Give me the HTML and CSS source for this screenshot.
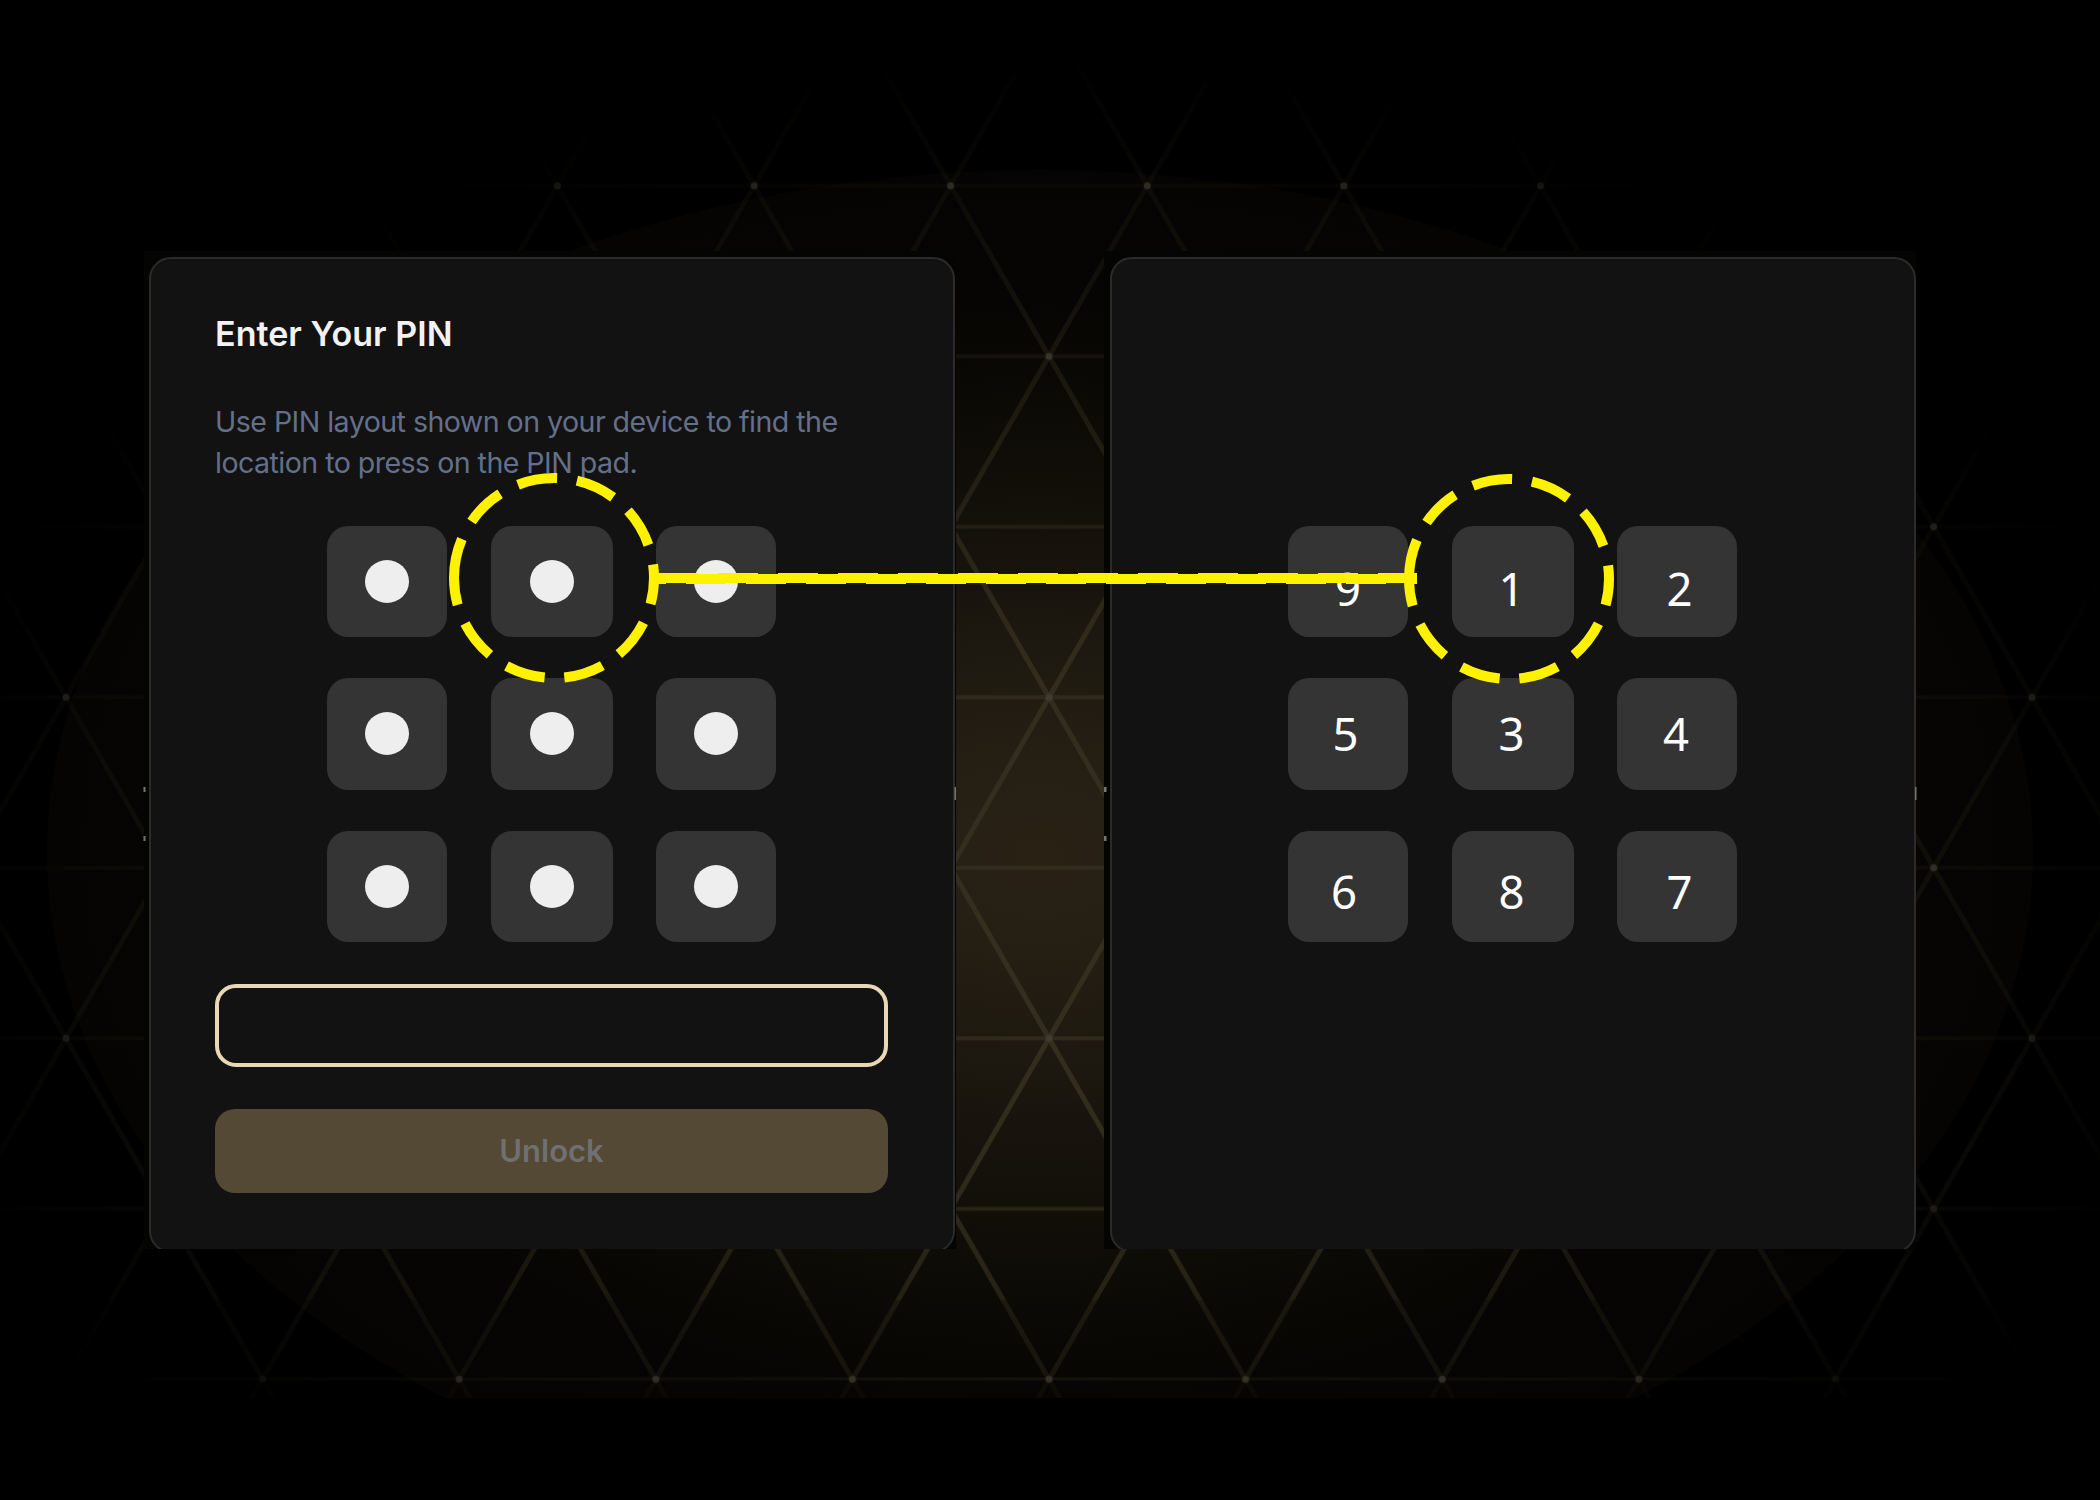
FILE: index.html
```html
<!DOCTYPE html>
<html lang="en">
<head>
<meta charset="utf-8">
<title>Enter Your PIN</title>
<link rel="stylesheet" href="styles.css">
</head>
<body>
<main class="stage">
  <svg class="backdrop" width="2100" height="1500" viewBox="0 0 2100 1500" aria-hidden="true">
    <defs>
      <radialGradient id="glow" gradientUnits="userSpaceOnUse" cx="0" cy="0" r="1" gradientTransform="translate(1040 852) scale(993 682)">
        <stop offset="0" stop-color="#2a2014"/>
        <stop offset=".1" stop-color="#262014"/>
        <stop offset=".25" stop-color="#201b11"/>
        <stop offset=".4" stop-color="#18140d"/>
        <stop offset=".55" stop-color="#110e08"/>
        <stop offset=".68" stop-color="#0a0905"/>
        <stop offset=".8" stop-color="#060503"/>
        <stop offset="1" stop-color="#050402"/>
      </radialGradient>
      <radialGradient id="fade" gradientUnits="userSpaceOnUse" cx="0" cy="0" r="1" gradientTransform="translate(1049 920) scale(1150 870)">
        <stop offset="0" stop-color="#fff"/>
        <stop offset=".3" stop-color="#ddd"/>
        <stop offset=".5" stop-color="#888"/>
        <stop offset=".65" stop-color="#5c5c5c"/>
        <stop offset=".8" stop-color="#333"/>
        <stop offset="1" stop-color="#000"/>
      </radialGradient>
      <radialGradient id="nodeFade" gradientUnits="userSpaceOnUse" cx="0" cy="0" r="1" gradientTransform="translate(1049 840) scale(1150 820)">
        <stop offset="0" stop-color="#fff"/>
        <stop offset=".8" stop-color="#aaa"/>
        <stop offset="1" stop-color="#000"/>
      </radialGradient>
      <mask id="meshMask" maskUnits="userSpaceOnUse" x="0" y="0" width="2100" height="1500"><rect width="2100" height="1398" fill="url(#fade)"/></mask>
      <mask id="nodeMask" maskUnits="userSpaceOnUse" x="0" y="0" width="2100" height="1500"><rect width="2100" height="1398" fill="url(#nodeFade)"/></mask>
      <pattern id="mesh" patternUnits="userSpaceOnUse" x="1049" y="356.3" width="196.6" height="341">
        <path d="M0 0L196.6 341M196.6 0L0 341" fill="none" stroke="#34301f" stroke-width="5"/>
        <path d="M0 0H196.6M0 170.5H196.6M0 341H196.6" fill="none" stroke="#34301f" stroke-width="4" opacity=".8"/>
      </pattern>
      <pattern id="nodes" patternUnits="userSpaceOnUse" x="1049" y="356.3" width="196.6" height="341">
        <g fill="#403d33"><circle r="3.500"/><circle cx="196.6" r="3.500"/><circle cy="341" r="3.500"/><circle cx="196.6" cy="341" r="3.500"/><circle cx="98.3" cy="170.5" r="3.500"/></g>
      </pattern>
      <clipPath id="lit"><rect width="2100" height="1398"/></clipPath>
    </defs>
    <ellipse cx="1040" cy="852" rx="993" ry="682" fill="url(#glow)" clip-path="url(#lit)"/>
    <g mask="url(#meshMask)">
      <rect width="2100" height="1300" fill="url(#mesh)"/>
      <rect y="1300" width="2100" height="80" fill="url(#mesh)" opacity=".7"/>
      <rect y="1380" width="2100" height="18" fill="url(#mesh)" opacity=".3"/>
    </g>
    <rect width="2100" height="1398" fill="url(#nodes)" mask="url(#nodeMask)"/>
  </svg>

  <section class="panel">
    <div class="card">
      <h1 class="title">Enter Your PIN</h1>
      <p class="hint">Use PIN layout shown on your device to find the<br>location to press on the PIN pad.</p>
      <div class="pad">
        <div class="key"><i class="dot"></i></div><div class="key"><i class="dot"></i></div><div class="key"><i class="dot"></i></div>
        <div class="key"><i class="dot"></i></div><div class="key"><i class="dot"></i></div><div class="key"><i class="dot"></i></div>
        <div class="key"><i class="dot"></i></div><div class="key"><i class="dot"></i></div><div class="key"><i class="dot"></i></div>
      </div>
      <div class="field"></div>
      <div class="unlock"><span>Unlock</span></div>
    </div>
  </section>

  <section class="panel">
    <div class="card device">
      <div class="pad digits">
        <div class="key r1">9</div><div class="key r1 left1">1</div><div class="key r1 right2">2</div>
        <div class="key r2 left3">5</div><div class="key r2 left1">3</div><div class="key r2 left1">4</div>
        <div class="key r3 left4">6</div><div class="key r3 left1">8</div><div class="key r3 right2">7</div>
      </div>
    </div>
  </section>

  <svg class="callout" width="2100" height="1500" viewBox="0 0 2100 1500" aria-hidden="true">
    <g fill="#77756f">
      <path d="M143.5 787h2v5h-2zM143.5 836h2v5h-2zM1104 787h2.500v5h-2.500zM1104 836h2.500v5h-2.500z"/>
      <path d="M954.500 787h1.500v13h-1.500zM1915 787h1.500v13h-1.500z"/>
    </g>
    <g fill="none" stroke="#fff200" stroke-width="10" stroke-dasharray="40 20">
      <path d="M454 578A100 100 0 0 1 654 578A100 100 0 0 1 454 578"/>
      <path d="M1409 579A100 100 0 0 1 1609 579A100 100 0 0 1 1409 579"/>
      <path d="M658 578H1417"/>
      <path d="M656 579H1417" stroke-dashoffset="30"/>
    </g>
  </svg>
</main>
</body>
</html>
```

FILE: styles.css
```css
* { box-sizing: border-box; }
body { margin: 0; background: #000; }
.stage {
  position: relative;
  display: flex;
  gap: 148px;
  align-items: flex-start;
  width: 2100px;
  height: 1500px;
  padding: 251px 0 0 144px;
  overflow: hidden;
  font-family: Inter, "Liberation Sans", sans-serif;
}
.backdrop, .callout { position: absolute; left: 0; top: 0; }
.panel {
  position: relative;
  flex: none;
  width: 812px;
  height: 998px;
  padding: 5.5px 0 0 5px;
  background: #040403;
  overflow: hidden;
}
.panel + .panel { padding-left: 6px; }
.card {
  display: flex;
  flex-direction: column;
  width: 806px;
  height: 996px;
  padding: 49px 65px 0 64px;
  background: #121212;
  border: 2px solid #2b2b2b;
  border-radius: 22px;
}
.title {
  margin: 0;
  height: 93px;
  color: #f2f2f2;
  font-size: 34px;
  line-height: 51px;
  font-weight: 600;
  letter-spacing: .05px;
  white-space: nowrap;
}
.hint {
  margin: 0;
  height: 125px;
  color: #64708a;
  font-size: 28.6px;
  line-height: 41.9px;
  letter-spacing: -.55px;
  white-space: nowrap;
}
.pad {
  display: grid;
  grid-template-columns: 120px 122px 120px;
  grid-auto-rows: 111.5px;
  gap: 41.2px 43.5px;
  justify-content: center;
}
.key {
  display: flex;
  align-items: center;
  justify-content: center;
  background: #343434;
  border-radius: 21px;
}
.dot { width: 44px; height: 43px; border-radius: 50%; background: #eee; }
.field { margin-top: 42px; height: 83px; border: 4px solid #e9d8b6; border-radius: 21px; flex: none; }
.unlock {
  display: flex;
  align-items: center;
  justify-content: center;
  flex: none;
  margin-top: 41.5px;
  height: 84px;
  color: #707070;
  background: #544934;
  border-radius: 20px;
  font-size: 31px;
  font-weight: 600;
}
.device { padding-top: 267px; }
.digits { color: #fff; font: 45.5px/62px "Noto Sans", "Open Sans", sans-serif; }
.r1 { padding-top: 14px; }
.r2 { padding-bottom: 2px; }
.r3 { padding-top: 9px; }
.left1 { padding-right: 2px; }
.left3 { padding-right: 5px; }
.left4 { padding-right: 8px; }
.right2 { padding-left: 5px; }
```
